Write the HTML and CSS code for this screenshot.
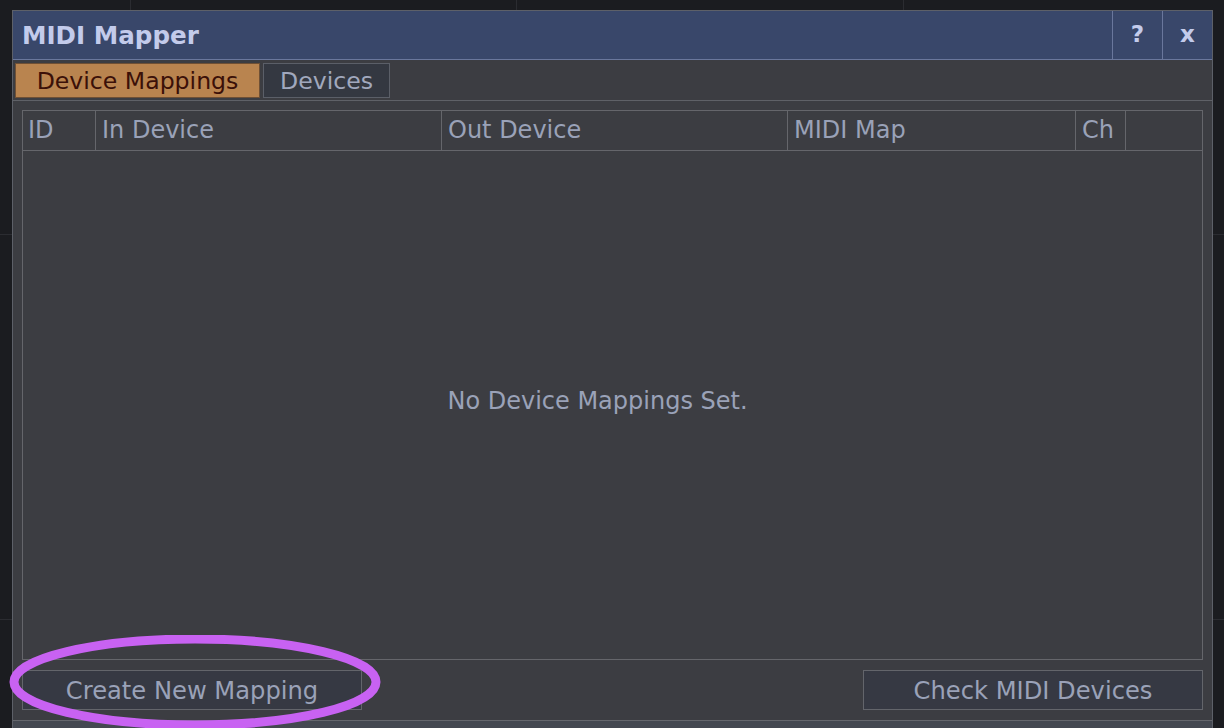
FILE: index.html
```html
<!DOCTYPE html>
<html lang="en">
<head>
<meta charset="utf-8">
<title>MIDI Mapper</title>
<link rel="stylesheet" href="styles.css">
</head>
<body>
<div class="desktop">
  <section class="window">
    <header class="titlebar">
      <h1 class="title">MIDI Mapper</h1>
      <button class="tb-btn">?</button>
      <button class="tb-btn">x</button>
    </header>
    <nav class="tabs">
      <button class="tab active">Device Mappings</button>
      <button class="tab">Devices</button>
    </nav>
    <div class="content">
      <div class="table">
        <div class="thead">
          <div class="th">ID</div>
          <div class="th">In Device</div>
          <div class="th">Out Device</div>
          <div class="th">MIDI Map</div>
          <div class="th">Ch</div>
          <div class="th last"></div>
        </div>
        <div class="tbody">
          <p class="empty">No Device Mappings Set.</p>
        </div>
      </div>
      <div class="actions">
        <button class="btn">Create New Mapping</button>
        <button class="btn">Check MIDI Devices</button>
      </div>
    </div>
    <div class="footer"></div>
  </section>
  <svg class="highlight" width="400" height="110" viewBox="0 0 400 110">
    <ellipse cx="195" cy="47" rx="181" ry="43" fill="none" stroke="#c862f2" stroke-width="9"/>
  </svg>
</div>
</body>
</html>
```

FILE: styles.css
```css
* { box-sizing: border-box; }
html, body { margin: 0; padding: 0; }
body {
  width: 1224px;
  height: 728px;
  overflow: hidden;
  font-family: "DejaVu Sans", Verdana, sans-serif;
  background-color: #1b1c20;
  background-image:
    linear-gradient(#2b2c31, #2b2c31),
    linear-gradient(#2b2c31, #2b2c31),
    linear-gradient(#2b2c31, #2b2c31),
    linear-gradient(#2b2c31, #2b2c31),
    linear-gradient(#2b2c31, #2b2c31);
  background-repeat: no-repeat;
  background-size: 1px 10px, 1px 10px, 1px 10px, 100% 1px, 100% 1px;
  background-position: 130px 0, 516px 0, 903px 0, 0 234px, 0 619px;
}
.desktop { position: relative; width: 1224px; height: 728px; }
.window {
  position: absolute;
  left: 12px;
  top: 10px;
  width: 1201px;
  height: 740px;
  border: 1px solid #5d6068;
  background: #3c3d42;
  display: flex;
  flex-direction: column;
}
.titlebar {
  height: 49px;
  background: #39476a;
  border-bottom: 1px solid #6a779c;
  display: flex;
  align-items: stretch;
}
.title {
  flex: 1;
  margin: 0;
  padding-left: 9px;
  font-size: 24.6px;
  font-weight: bold;
  color: #c3cbeb;
  line-height: 50px;
}
.tb-btn {
  width: 50px;
  border: 0;
  border-left: 1px solid #6a779c;
  background: transparent;
  color: #c3cbeb;
  font: bold 23px "DejaVu Sans", Verdana, sans-serif;
  padding: 0;
  padding-bottom: 2px;
}
.tabs {
  height: 41px;
  border-bottom: 1px solid #5f6167;
  padding: 3px 2px 0 2px;
  display: flex;
  gap: 3px;
  align-items: flex-start;
}
.tab {
  height: 35px;
  font: 23.6px "DejaVu Sans", Verdana, sans-serif;
  padding: 0;
  border: 1px solid #5b5f68;
  background: #343841;
  color: #a1a8bd;
}
.tab.active {
  width: 245px;
  background: #b9844f;
  border-color: #6f5035;
  color: #3b1008;
}
.tab:not(.active) { width: 127px; }
.content {
  padding: 9px 9px 0 9px;
  display: flex;
  flex-direction: column;
}
.table {
  height: 550px;
  border: 1px solid #65666b;
  display: flex;
  flex-direction: column;
}
.thead {
  height: 40px;
  border-bottom: 1px solid #65666b;
  display: grid;
  grid-template-columns: 73px 346px 346px 288px 50px 75px;
}
.th {
  border-right: 1px solid #65666b;
  padding-left: 6px;
  font-size: 24px;
  line-height: 39px;
  color: #9aa2b8;
  white-space: nowrap;
  overflow: hidden;
}
.th:first-child { padding-left: 5px; }
.th.last { border-right: 0; }
.tbody {
  flex: 1;
  display: flex;
  align-items: center;
  justify-content: center;
  padding-right: 30px;
}
.empty {
  margin: 0 0 8px 0;
  font-size: 24px;
  color: #9aa2b8;
}
.actions {
  margin-top: 10px;
  display: flex;
  justify-content: space-between;
}
.btn {
  width: 340px;
  height: 40px;
  border: 1px solid #63656b;
  background: #363943;
  color: #9aa2b8;
  font: 24.2px "DejaVu Sans", Verdana, sans-serif;
  padding: 0;
  padding-top: 2px;
}
.footer {
  margin-top: 10px;
  flex: 1;
  border-top: 1px solid #65676d;
  background: #444851;
}
.highlight {
  position: absolute;
  left: 0;
  top: 635px;
  pointer-events: none;
}
```
